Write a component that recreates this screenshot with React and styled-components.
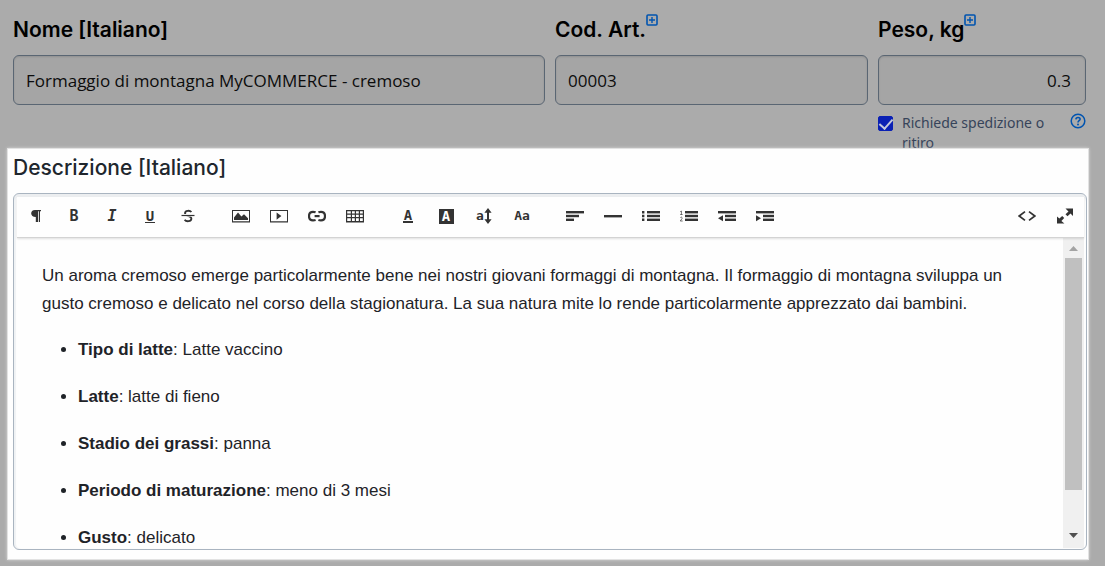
import { useState } from "react"
import styled, { createGlobalStyle } from "styled-components"

const GlobalStyle = createGlobalStyle`
  * {
    box-sizing: border-box;
  }

  body {
    margin: 0;
    background-color: #ababab;
  }
`;

const Page = styled.main`
  padding-bottom: 7px;
  font-family: "Noto Sans", sans-serif;
`;

const Fields = styled.form`
  display: grid;
  grid-template-columns: 532fr 313fr 208fr;
  gap: 10px;
  padding: 14px 19px 0 13px;
`;

const Field = styled.div`
  min-width: 0;
`;

const LabelRow = styled.div`
  display: flex;
  align-items: flex-start;
  margin-bottom: 9px;
`;

const Label = styled.label`
  font-family: Inter, sans-serif;
  font-size: 21px;
  font-weight: 600;
  line-height: 32px;
  color: #000;
`;

const IconButton = styled.button`
  display: flex;
  flex: none;
  padding: 0;
  border: none;
  background: none;
  color: #0054b0;
  cursor: pointer;
`;

const Input = styled.input`
  display: block;
  width: 100%;
  height: 50px;
  padding: 0 ${(props) => (props.$align === "right" ? "14px" : "12px")};
  border: 1px solid #5a6673;
  border-radius: 6px;
  background-color: #a5a5a5;
  box-shadow: inset 0 1px 2px rgba(0, 0, 0, 0.12);
  font-family: "Open Sans", sans-serif;
  font-size: 17px;
  color: #0c0c0c;
  text-align: ${(props) => props.$align || "left"};
`;

const ShippingRow = styled.div`
  display: flex;
  align-items: flex-start;
  gap: 9px;
  margin-top: 8px;
`;

const Checkbox = styled.input`
  appearance: none;
  display: grid;
  place-items: center;
  flex: none;
  width: 15px;
  height: 15px;
  margin: 3px 0 0;
  border: 1px solid #0a20b4;
  border-radius: 2px;

  &:checked {
    background-color: #0a20b4;
  }

  &:checked::after {
    content: "";
    width: 6px;
    height: 11px;
    border: solid #c4c8dc;
    border-width: 0 2px 2px 0;
    transform: translateY(-1px) rotate(42deg);
  }
`;

const ShippingLabel = styled.label`
  flex: 1;
  font-size: 14px;
  line-height: 20px;
  color: #37445a;
`;

const Panel = styled.section`
  position: relative;
  margin: -5px 16px 0 7px;
  padding: 3px 1px 9px 5px;
  border: 1px solid #e2e2e2;
  background-color: #fefefe;
  box-shadow: 0 0 3px rgba(255, 255, 255, 0.5);
`;

const PanelTitle = styled.h2`
  margin: 0 0 9px;
  font-family: Inter, sans-serif;
  font-size: 21px;
  font-weight: 500;
  line-height: 32px;
  color: #20262d;
`;

const Editor = styled.div`
  padding: 3px 2px 1px 3px;
  border: 1px solid #a9b4c0;
  border-radius: 6px;
  background-color: #fefefe;
  box-shadow: inset 0 3px 1px #eceef0, inset 2px 0 1px #f0f2f4;
`;

const Toolbar = styled.div`
  position: relative;
  display: flex;
  gap: 15px;
  height: 41px;
  border-bottom: 1px solid #d3d3d3;
  background-color: #fefefe;
  box-shadow: 0 1px 2px rgba(0, 0, 0, 0.12);
`;

const Group = styled.div`
  display: flex;
  margin-left: ${(props) => (props.$end ? "auto" : "0")};
`;

const Tool = styled.button`
  display: flex;
  align-items: center;
  justify-content: center;
  width: 38px;
  height: 38px;
  padding: 0;
  border: none;
  background: none;
  color: #333;
  cursor: pointer;
`;

const Glyph = styled.span`
  font-family: "DejaVu Sans Mono", monospace;
  font-size: ${(props) => props.$size || 14}px;
  font-weight: bold;
  font-style: ${(props) => (props.$italic ? "italic" : "normal")};
  line-height: 14px;
`;

const Underlined = styled(Glyph)`
  padding: 0 1px;
  border-bottom: ${(props) => props.$bar || 1}px solid #333;
  line-height: 12px;
`;

const Inverse = styled(Glyph)`
  width: 15px;
  height: 15px;
  background-color: #333;
  color: #fff;
  line-height: 15px;
  text-align: center;
`;

const Body = styled.div`
  display: flex;
  height: 310px;
`;

const Content = styled.div`
  flex: 1;
  overflow: hidden;
  padding: 24px 25px 0;
  outline: none;
  font-family: "Liberation Sans", Arial, sans-serif;
  font-size: 17px;
  line-height: 28px;
  color: #1f2328;

  p {
    margin: 0 0 18px;
  }

  ul {
    margin: 0;
    padding-left: 36px;
  }

  li {
    margin-bottom: 19px;
  }
`;

const Scrollbar = styled.div`
  display: flex;
  flex-direction: column;
  align-items: center;
  width: 21px;
  padding-bottom: 3px;
  background-color: #f0f0f0;
`;

const ScrollButton = styled.button`
  display: flex;
  align-items: center;
  justify-content: center;
  width: 17px;
  height: 20px;
  padding: 0;
  border: none;
  background: none;
  color: ${(props) => (props.disabled ? "#a3a3a3" : "#505050")};
`;

const Track = styled.div`
  flex: 1;
  width: 17px;
`;

const Thumb = styled.div`
  height: 87%;
  background-color: #c0c0c0;
`;

const Icon = ({ width = 18, height = 16, children }) => (
  <svg width={width} height={height} viewBox={`0 0 ${width} ${height}`} fill="currentColor" aria-hidden="true">
    {children}
  </svg>
)

const PlusIcon = () => (
  <Icon width={12} height={12}>
    <rect x="1" y="1" width="10" height="10" rx="1" fill="none" stroke="currentColor" strokeWidth="1.6" />
    <path d="M5.3 3h1.4v2.3H9v1.4H6.700V9H5.300V6.700H3V5.300h2.300z" />
  </Icon>
)

const HelpIcon = () => (
  <Icon width={16} height={16}>
    <circle cx="8" cy="8" r="6.8" fill="none" stroke="currentColor" strokeWidth="1.5" />
    <path d="M5.9 6.4C6 3.8 10.2 4 10.1 6.3 10 7.7 8 7.8 8 9.5" fill="none" stroke="currentColor" strokeWidth="1.6" />
    <circle cx="8" cy="11.5" r="1" />
  </Icon>
)

const lines = (rows) => rows.map(([x, y, w]) => <rect key={y} x={x} y={y} width={w} height="2.4" />)

const groups = [
  [
    ["Formato paragrafo", <Icon><path d="M8 2h6v1.2h-1V14h-1.2V3.2H11V14H8.8V9C2.8 9 2.8 2 8 2z" /></Icon>],
    ["Grassetto", <Glyph $size={15}>B</Glyph>],
    ["Corsivo", <Glyph $size={15} $italic>I</Glyph>],
    ["Sottolineato", <Underlined>U</Underlined>],
    ["Barrato", (
      <Icon>
        <path d="M12.4 4C11 2.2 6 2.2 6 5.2 6 8.4 12.4 7.2 12.4 10.6 12.4 13.8 7.2 14 5.6 11.8" fill="none" stroke="currentColor" strokeWidth="1.8" />
        <path d="M2.5 7.3h13" stroke="#fefefe" strokeWidth="2.6" />
        <path d="M2.5 7.5h13" stroke="currentColor" strokeWidth="1.2" />
      </Icon>
    )],
  ],
  [
    ["Immagine", (
      <Icon>
        <path d="M0 2h18v12.6H0zM1 3v10.2h16V3z" fillRule="evenodd" />
        <path d="M2 12V9.5L6 4.6l3.4 4L12 6.2l4 4V12z" />
      </Icon>
    )],
    ["Video", (
      <Icon>
        <path d="M0 2h18v12.6H0zM1 3v10.2h16V3z" fillRule="evenodd" />
        <path d="M6.6 4.4v7.4l4.8-3.7z" />
      </Icon>
    )],
    ["Link", (
      <Icon>
        <g fill="none" stroke="currentColor" strokeWidth="2.2">
          <path d="M7.6 4.2C6.8 3.9 6 3.8 5 3.8 2.4 3.8 1 5.6 1 8.1s1.4 4.3 4 4.3c1 0 1.8-.1 2.6-.4M10.4 4.2c.8-.3 1.6-.4 2.6-.4 2.6 0 4 1.8 4 4.3s-1.4 4.3-4 4.3c-1 0-1.8-.1-2.6-.4" />
          <path d="M6.6 8.1h5" />
        </g>
      </Icon>
    )],
    ["Tabella", (
      <Icon>
        <path d="M0 2h18v12.6H0zM1.2 3.2v2.3h3.6V3.2zm4.8 0v2.3h2.8V3.2zm4 0v2.3h2.8V3.2zm4 0v2.3h2.8V3.2zM1.2 6.7V9h3.6V6.7zm4.8 0V9h2.8V6.7zm4 0V9h2.8V6.7zm4 0V9h2.8V6.7zM1.2 10.2v2.8h3.6v-2.8zm4.8 0v2.8h2.8v-2.8zm4 0v2.8h2.8v-2.8zm4 0v2.8h2.8v-2.8z" fillRule="evenodd" />
      </Icon>
    )],
  ],
  [
    ["Colore testo", <Underlined $bar={2}>A</Underlined>],
    ["Colore sfondo", <Inverse>A</Inverse>],
    ["Dimensione testo", (
      <>
        <Glyph $size={13}>a</Glyph>
        <Icon width={8}><path d="M4 0l3.6 4.8H5v6.4h2.6L4 16 .4 11.2H3V4.8H.4z" /></Icon>
      </>
    )],
    ["Carattere", <Glyph $size={13}>Aa</Glyph>],
  ],
  [
    ["Allinea", <Icon>{lines([[0, 3, 18], [0, 6.8, 13], [0, 10.6, 8]])}</Icon>],
    ["Linea orizzontale", <Icon>{lines([[0, 7, 18]])}</Icon>],
    ["Elenco puntato", (
      <Icon>
        {lines([[5, 3, 13], [5, 6.8, 13], [5, 10.6, 13]])}
        <path d="M0 3h2.4v2.4H0zM0 6.8h2.4v2.4H0zM0 10.6h2.4V13H0z" />
      </Icon>
    )],
    ["Elenco numerato", (
      <Icon>
        {lines([[5, 3, 13], [5, 6.8, 13], [5, 10.6, 13]])}
        <path d="M.3 3.6L1.4 3v3.500M.2 6.5h2.4M.3 9.8c.6-1.200 2.200-.7 1.800.6L.3 13h2.4" fill="none" stroke="currentColor" strokeWidth=".7" />
      </Icon>
    )],
    ["Riduci rientro", (
      <Icon>
        {lines([[0, 3, 18], [7, 6.8, 11], [7, 10.6, 11]])}
        <path d="M5 7.2v6L0 10.200z" />
      </Icon>
    )],
    ["Aumenta rientro", (
      <Icon>
        {lines([[0, 3, 18], [7, 6.8, 11], [7, 10.6, 11]])}
        <path d="M0 7.2v6l5-3z" />
      </Icon>
    )],
  ],
  [
    ["Codice HTML", <Icon><path d="M7 3.6L1.2 8 7 12.4M11 3.6L16.8 8 11 12.4" fill="none" stroke="currentColor" strokeWidth="1.7" /></Icon>],
    ["Schermo intero", (
      <Icon width={16}>
        <path d="M8.500.6H16V8l-2.500-2.400-3 2.600-2-2 3-2.700zM0 8.400l2.400 2.200 2.800-2.600 2 2-2.800 2.900 3 2.700H0z" />
      </Icon>
    )],
  ],
]

const details = [
  ["Tipo di latte", "Latte vaccino"],
  ["Latte", "latte di fieno"],
  ["Stadio dei grassi", "panna"],
  ["Periodo di maturazione", "meno di 3 mesi"],
  ["Gusto", "delicato"],
]

const App = () => {
  const [data, setData] = useState({
    name: "Formaggio di montagna MyCOMMERCE - cremoso",
    sku: "00003",
    weight: "0.3",
    shipping: true,
  })

  const handleChange = (e) => {
    const { name, value, type, checked } = e.target
    setData((prev) => {
      return { ...prev, [name]: type === "checkbox" ? checked : value }
    })
  }

  return (
    <Page>
      <GlobalStyle />
      <Fields>
        <Field>
          <LabelRow>
            <Label htmlFor="name">Nome [Italiano]</Label>
          </LabelRow>
          <Input id="name" name="name" type="text" value={data.name} onChange={handleChange} />
        </Field>
        <Field>
          <LabelRow>
            <Label htmlFor="sku">Cod. Art.</Label>
            <IconButton type="button" aria-label="Aggiungi codice"><PlusIcon /></IconButton>
          </LabelRow>
          <Input id="sku" name="sku" type="text" value={data.sku} onChange={handleChange} />
        </Field>
        <Field>
          <LabelRow>
            <Label htmlFor="weight">Peso, kg</Label>
            <IconButton type="button" aria-label="Aggiungi peso"><PlusIcon /></IconButton>
          </LabelRow>
          <Input id="weight" name="weight" type="text" $align="right" value={data.weight} onChange={handleChange} />
          <ShippingRow>
            <Checkbox id="shipping" name="shipping" type="checkbox" checked={data.shipping} onChange={handleChange} />
            <ShippingLabel htmlFor="shipping">Richiede spedizione o ritiro</ShippingLabel>
            <IconButton type="button" aria-label="Aiuto"><HelpIcon /></IconButton>
          </ShippingRow>
        </Field>
      </Fields>

      <Panel>
        <PanelTitle id="description">Descrizione [Italiano]</PanelTitle>
        <Editor>
          <Toolbar role="toolbar">
            {groups.map((tools, i) => (
              <Group key={i} $end={i === groups.length - 1}>
                {tools.map(([title, icon]) => (
                  <Tool key={title} type="button" aria-label={title}>{icon}</Tool>
                ))}
              </Group>
            ))}
          </Toolbar>
          <Body>
            <Content contentEditable suppressContentEditableWarning spellCheck={false} role="textbox" aria-multiline="true" aria-labelledby="description">
              <p>
                Un aroma cremoso emerge particolarmente bene nei nostri giovani formaggi di montagna. Il formaggio di montagna sviluppa un gusto cremoso e delicato nel corso della stagionatura. La sua natura mite lo rende particolarmente apprezzato dai bambini.
              </p>
              <ul>
                {details.map(([title, text]) => (
                  <li key={title}><strong>{title}</strong>: {text}</li>
                ))}
              </ul>
            </Content>
            <Scrollbar>
              <ScrollButton type="button" aria-label="Scorri su" disabled>
                <Icon width={9} height={5}><path d="M4.5 0L9 5H0z" /></Icon>
              </ScrollButton>
              <Track><Thumb /></Track>
              <ScrollButton type="button" aria-label="Scorri giù">
                <Icon width={9} height={5}><path d="M4.5 5L9 0H0z" /></Icon>
              </ScrollButton>
            </Scrollbar>
          </Body>
        </Editor>
      </Panel>
    </Page>
  )
}

export default App
